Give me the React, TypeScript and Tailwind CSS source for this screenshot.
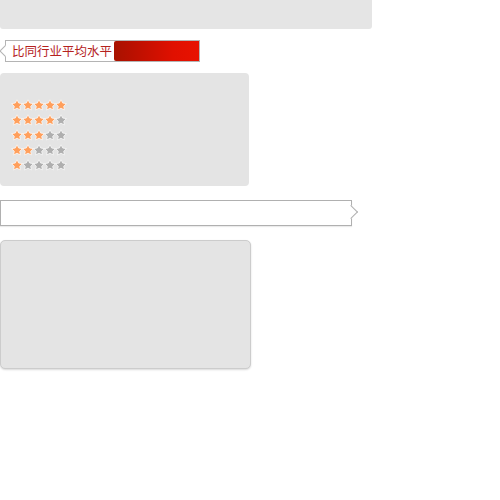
import React from "react";

const Star = ({ on }: { on: boolean }) => (
  <svg width="12" height="12" viewBox="0 0 24 24" className="block -mr-[1px]">
    <path
      d="M12 1.5l3.4 6.6 7.4 1.2-5.4 5.2 1.3 7.4L12 18.4l-6.7 3.5 1.3-7.4-5.4-5.2 7.4-1.2z"
      fill={on ? "#ff9f5c" : "#afafaf"}
      stroke="#ffffff"
      strokeWidth="1.4"
      strokeLinejoin="round"
    />
  </svg>
);

const ratings = [5, 4, 3, 2, 1];

export default function App() {
  return (
    <div className="w-[500px] h-[500px] bg-white font-['Noto_Sans_CJK_SC',sans-serif]">
      <div className="w-[372px] h-[29px] bg-[#e5e5e5] rounded-b-[3px]" />

      <div className="mt-[11px] ml-[5px] relative w-[195px] h-[22px] border border-[#b4b4b4] flex items-center bg-white">
        <span className="absolute -left-[5px] top-[6px] w-[8px] h-[8px] rotate-45 bg-white border-l border-b border-[#b4b4b4]" />
        <span className="pl-[6px] w-[108px] text-[12.5px] leading-none text-[#b5221e]">
          比同行业平均水平
        </span>
        <div className="h-[20px] flex-1 rounded-l-[2px] bg-[linear-gradient(90deg,#a81200_0%,#b81000_20%,#cc1000_45%,#e01000_70%,#e81200_100%)]" />
      </div>

      <div className="mt-[11px] w-[249px] h-[113px] bg-[#e4e4e4] rounded-[4px] pt-[26px] pl-[11px] flex flex-col gap-[3px]">
        {ratings.map((n) => (
          <div key={n} className="flex">
            {[1, 2, 3, 4, 5].map((i) => (
              <Star key={i} on={i <= n} />
            ))}
          </div>
        ))}
      </div>

      <div className="mt-[14px] relative w-[352px] h-[26px] border border-[#b0b0b0] bg-white shadow-[0_1px_1px_rgba(0,0,0,0.08)]">
        <span className="absolute -right-[5px] top-[6px] w-[10px] h-[10px] rotate-45 bg-white border-t border-r border-[#b0b0b0]" />
      </div>

      <div className="mt-[14px] w-[251px] h-[129px] bg-[#e4e4e4] border border-[#cccccc] rounded-[5px] shadow-[0_1px_2px_rgba(0,0,0,0.15)]" />
    </div>
  );
}
